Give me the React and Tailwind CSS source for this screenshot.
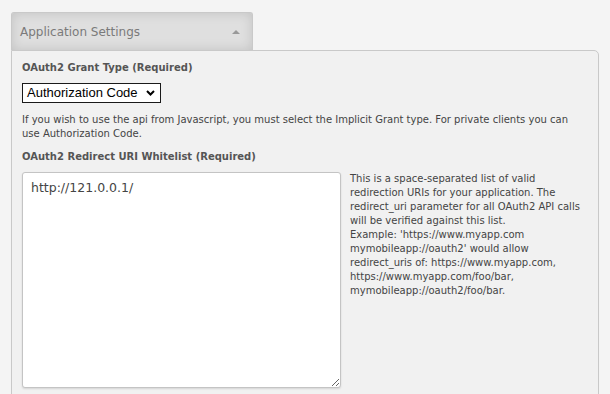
const BODY_FONT = "font-['Tahoma','DejaVu_Sans',sans-serif]";
const LABEL = "text-[10px] font-bold leading-[14px] text-[#555]";

function Chevron() {
  return (
    <svg width="9" height="6" viewBox="0 0 9 6" className="shrink-0">
      <path d="M1 1l3.5 3.5L8 1" fill="none" stroke="#000" strokeWidth="2" />
    </svg>
  );
}

export default function App() {
  return (
    <div className={`min-h-screen bg-[#f4f4f4] px-[11px] pt-[12px] ${BODY_FONT}`}>
      {/* tab header */}
      <div className="flex h-[38px] w-[242px] items-center justify-between rounded-t-[3px] border border-b-0 border-[#c9c9c9] bg-[#dfdfdf] pl-[8px] pr-[12px] shadow-[inset_0_0_12px_rgba(0,0,0,0.13)]">
        <span className="text-[12px] text-[#7a7a7a]">Application Settings</span>
        <span className="h-0 w-0 border-x-[4px] border-b-[4px] border-x-transparent border-b-[#999]" />
      </div>

      {/* panel */}
      <div className="rounded-tr-[5px] border border-[#c9c9c9] bg-[#f1f1f1] pb-[20px] pl-[10px] pr-[10px] pt-[10px]">
        <div className={LABEL}>OAuth2 Grant Type (Required)</div>

        <div className="mt-[8px] flex h-[20px] w-[139px] items-center justify-between border border-[#1a1a1a] bg-white pl-[4px] pr-[5px] font-['Liberation_Sans',Arial,sans-serif] text-[13px] text-black">
          <span>Authorization Code</span>
          <Chevron />
        </div>

        <p className="mt-[10px] text-[10px] leading-[14px] text-[#444]">
          If you wish to use the api from Javascript, you must select the Implicit Grant type. For private clients you can use Authorization Code.
        </p>

        <div className={`mt-[9px] ${LABEL}`}>OAuth2 Redirect URI Whitelist (Required)</div>

        <div className="mt-[8px] flex items-start gap-[9px]">
          <textarea
            readOnly
            defaultValue="http://121.0.0.1/"
            className="h-[216px] w-[319px] shrink-0 rounded-[3px] border border-[#c4c4c4] bg-white px-[8px] pt-[6px] text-[12.5px] leading-[18px] text-[#444] shadow-[0_1px_2px_rgba(0,0,0,0.12)] outline-none"
          />
          <p className="w-[240px] text-[10px] leading-[14px] text-[#444]">
            This is a space-separated list of valid redirection URIs for your application. The redirect_uri parameter for all OAuth2 API calls will be verified against this list.
            <br />
            Example: 'https://www.myapp.com mymobileapp://oauth2' would allow redirect_uris of: https://www.myapp.com, https://www.myapp.com/foo/bar, mymobileapp://oauth2/foo/bar.
          </p>
        </div>
      </div>
    </div>
  );
}
